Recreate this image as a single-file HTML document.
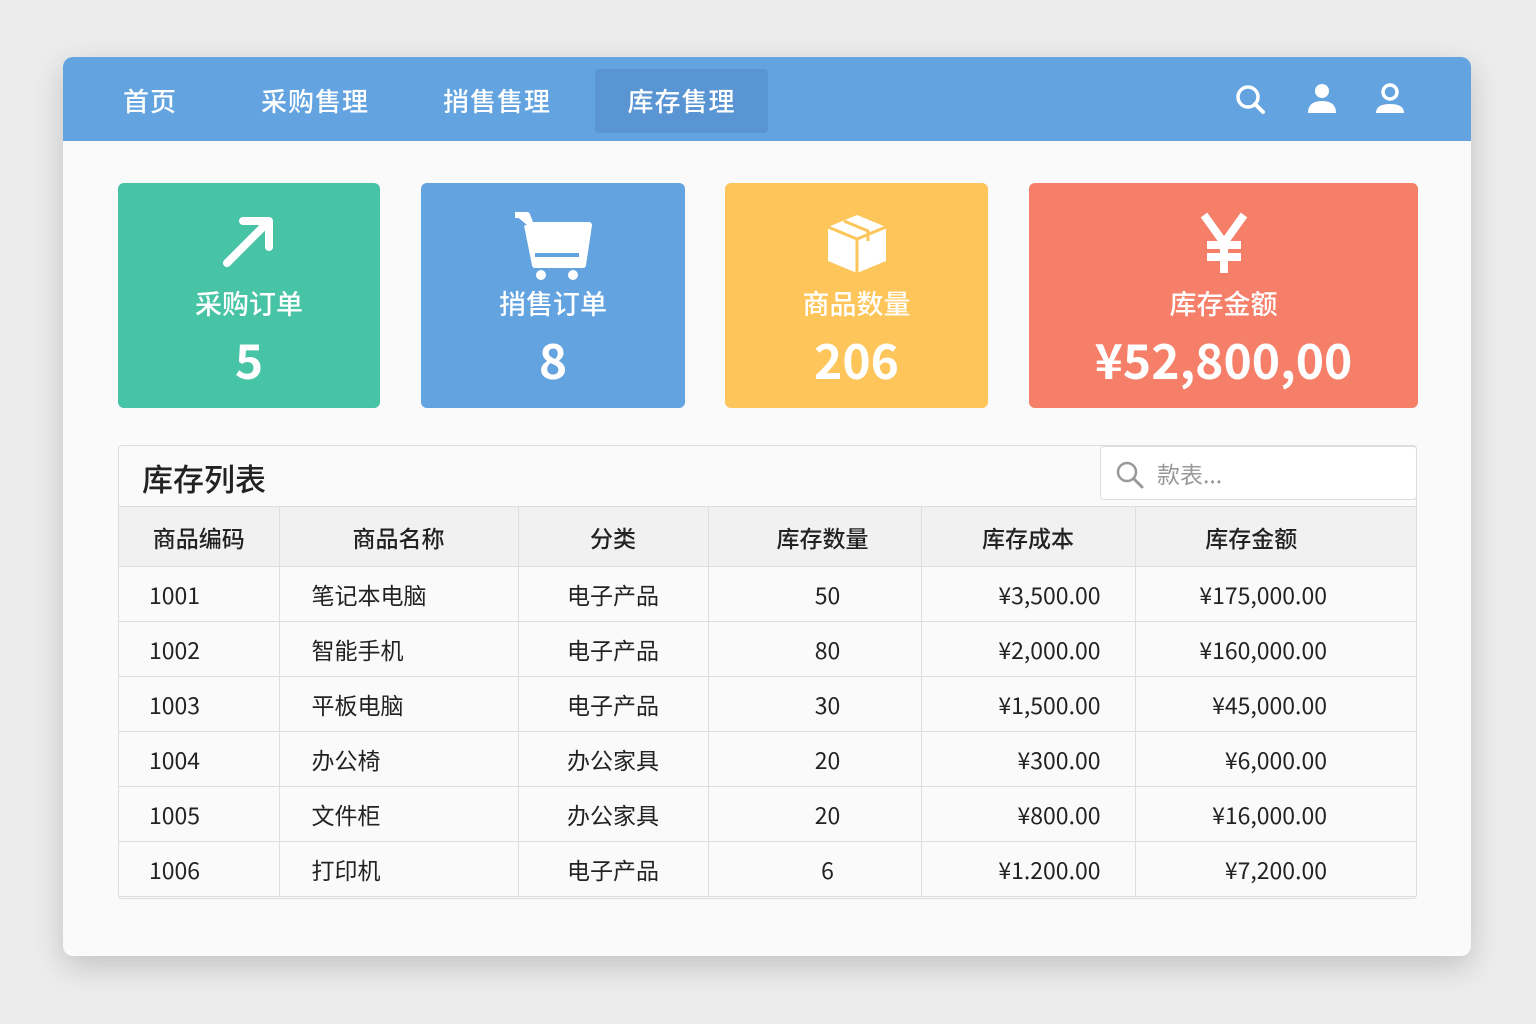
<!DOCTYPE html>
<html><head><meta charset="utf-8"><style>
*{margin:0;padding:0;box-sizing:border-box}
body{width:1536px;height:1024px;background:#ececec;font-family:"Noto Sans CJK SC","Liberation Sans",sans-serif;position:relative;overflow:hidden}
.win{position:absolute;left:63px;top:57px;width:1408px;height:899px;background:#fafafa;border-radius:10px;box-shadow:0 10px 30px rgba(0,0,0,.18);overflow:hidden}
.nav{height:84px;background:#62a3e0;position:relative}
.tab{position:absolute;top:12px;height:64px;line-height:64px;color:#fff;font-size:26px;letter-spacing:1px;font-weight:500}
.tab.act{background:#5895d2;border-radius:4px}
.card{position:absolute;top:126px;height:225px;border-radius:6px;color:#fff;text-align:center}
.card .t{position:absolute;left:0;right:0;top:100px;font-size:27px;line-height:40px;font-weight:500}
.card .v{position:absolute;left:0;right:0;top:142px;font-size:48px;line-height:66px;font-weight:bold}
.card svg{position:absolute;left:50%;top:28px;transform:translateX(-50%)}
.tbl{position:absolute;left:55px;top:388px;width:1299px;height:454px;border:1px solid #ddd;border-radius:4px;background:#fafafa;overflow:hidden}
.ttl{position:absolute;left:23px;top:10px;font-size:31px;line-height:44px;color:#222;font-weight:500}
.srch{position:absolute;left:981px;top:0;width:317px;height:54px;border:1px solid #ddd;border-radius:4px;background:#fff;color:#999;font-size:23px;line-height:52px;padding-left:56px}
table{position:absolute;top:60px;left:0;width:1298px;border-collapse:collapse;font-size:23px;color:#222;line-height:30px}
td,th{border:1px solid #ddd;height:55px;font-weight:normal}
th{background:#f1f1f1;height:60px;font-weight:500}
tr td:first-child,tr th:first-child{border-left:none}
tr td:last-child,tr th:last-child{border-right:none}
</style></head><body>
<div class="win">
<div class="nav">
<div class="tab" style="left:60px">首页</div>
<div class="tab" style="left:198px">采购售理</div>
<div class="tab" style="left:380px">捎售售理</div>
<div class="tab act" style="left:532px;width:173px;text-align:center">库存售理</div>
<svg style="position:absolute;left:1170px;top:26px" width="34" height="34" viewBox="0 0 34 34"><circle cx="15" cy="14" r="10" fill="none" stroke="#fff" stroke-width="3.5"/><path d="M22 21l8 8" stroke="#fff" stroke-width="4" stroke-linecap="round"/></svg>
<svg style="position:absolute;left:1242px;top:24px" width="34" height="34" viewBox="0 0 34 34"><circle cx="17" cy="10" r="7" fill="#fff"/><path d="M3 32q0-12 14-12t14 12z" fill="#fff"/></svg>
<svg style="position:absolute;left:1310px;top:24px" width="34" height="34" viewBox="0 0 34 34"><circle cx="17" cy="11" r="7" fill="none" stroke="#fff" stroke-width="3.5"/><path d="M3 32q0-9 14-9t14 9z" fill="#fff"/></svg>
</div>
<div class="card" style="left:55px;width:262px;background:#47c3a5"><svg width="60" height="60" viewBox="0 0 60 60"><path d="M8 52L48 12M24 10h26v26" stroke="#fff" stroke-width="8" fill="none" stroke-linecap="round" stroke-linejoin="round"/></svg><div class="t">采购订单</div><div class="v">5</div></div>
<div class="card" style="left:358px;width:264px;background:#62a3e0"><svg width="84" height="70" viewBox="0 0 84 70"><path d="M4 4h12l4 10h58l-6 40H24L16 14" fill="#fff" stroke="#fff" stroke-width="6" stroke-linejoin="round"/><rect x="24" y="42" width="44" height="4" fill="#62a3e0"/><circle cx="30" cy="64" r="5" fill="#fff"/><circle cx="62" cy="64" r="5" fill="#fff"/></svg><div class="t">捎售订单</div><div class="v">8</div></div>
<div class="card" style="left:662px;width:263px;background:#fdc55a"><svg width="66" height="66" viewBox="0 0 66 66"><path d="M33 4L62 16V50L33 62L4 50V16Z" fill="#fff"/><path d="M4 16L33 28L62 16M33 28V62" stroke="#fdc55a" stroke-width="3" fill="none"/><path d="M20 10l24 10v10" stroke="#fdc55a" stroke-width="3" fill="none"/></svg><div class="t">商品数量</div><div class="v">206</div></div>
<div class="card" style="left:966px;width:389px;background:#f57f68"><svg width="50" height="66" viewBox="0 0 50 66"><path d="M5 4L25 32L45 4M25 32V62M8 34h34M8 46h34" stroke="#fff" stroke-width="8" fill="none"/></svg><div class="t">库存金额</div><div class="v">¥52,800,00</div></div>
<div class="tbl">
<div class="ttl">库存列表</div>
<div class="srch"><svg style="position:absolute;left:14px;top:13px" width="30" height="30" viewBox="0 0 30 30"><circle cx="12" cy="12" r="9" fill="none" stroke="#999" stroke-width="2.5"/><path d="M19 19l8 8" stroke="#999" stroke-width="3" stroke-linecap="round"/></svg>款表...</div>
<table>
<tr><th style="width:160px">商品编码</th><th style="width:239px">商品名称</th><th style="width:190px">分类</th><th style="width:213px;padding-left:16px">库存数量</th><th style="width:214px">库存成本</th><th style="padding-right:50px">库存金额</th></tr>
<tr><td style="padding-left:30px">1001</td><td style="padding-left:32px">笔记本电脑</td><td align="center">电子产品</td><td align="center" style="padding-left:26px">50</td><td align="right" style="padding-right:34px">¥3,500.00</td><td align="right" style="padding-right:90px">¥175,000.00</td></tr>
<tr><td style="padding-left:30px">1002</td><td style="padding-left:32px">智能手机</td><td align="center">电子产品</td><td align="center" style="padding-left:26px">80</td><td align="right" style="padding-right:34px">¥2,000.00</td><td align="right" style="padding-right:90px">¥160,000.00</td></tr>
<tr><td style="padding-left:30px">1003</td><td style="padding-left:32px">平板电脑</td><td align="center">电子产品</td><td align="center" style="padding-left:26px">30</td><td align="right" style="padding-right:34px">¥1,500.00</td><td align="right" style="padding-right:90px">¥45,000.00</td></tr>
<tr><td style="padding-left:30px">1004</td><td style="padding-left:32px">办公椅</td><td align="center">办公家具</td><td align="center" style="padding-left:26px">20</td><td align="right" style="padding-right:34px">¥300.00</td><td align="right" style="padding-right:90px">¥6,000.00</td></tr>
<tr><td style="padding-left:30px">1005</td><td style="padding-left:32px">文件柜</td><td align="center">办公家具</td><td align="center" style="padding-left:26px">20</td><td align="right" style="padding-right:34px">¥800.00</td><td align="right" style="padding-right:90px">¥16,000.00</td></tr>
<tr><td style="padding-left:30px">1006</td><td style="padding-left:32px">打印机</td><td align="center">电子产品</td><td align="center" style="padding-left:26px">6</td><td align="right" style="padding-right:34px">¥1.200.00</td><td align="right" style="padding-right:90px">¥7,200.00</td></tr>
</table>
</div>
</div>
</body></html>
